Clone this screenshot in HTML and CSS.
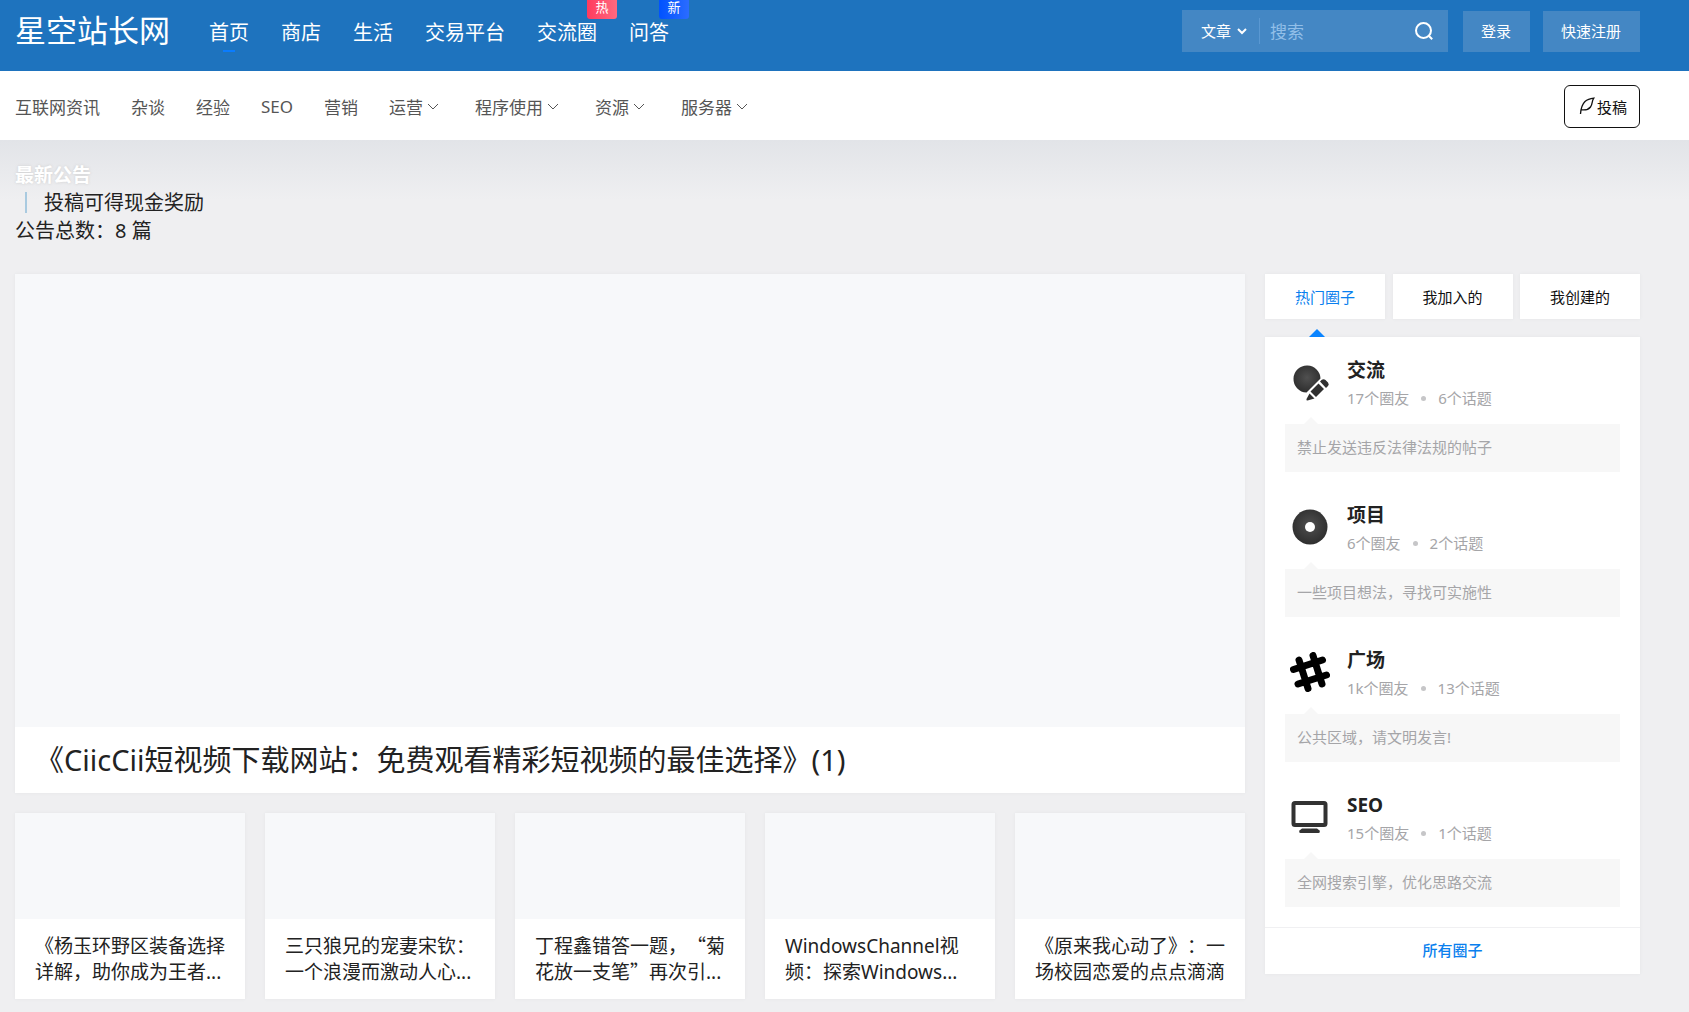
FILE: index.html
```html
<!DOCTYPE html>
<html lang="zh-CN">
<head>
<meta charset="utf-8">
<meta name="viewport" content="width=device-width, initial-scale=1">
<title>星空站长网</title>
<link rel="stylesheet" href="styles.css">
</head>
<body>
<header class="topbar">
  <a class="brand" href="#">星空站长网</a>
  <nav class="mainnav">
    <a class="active" href="#">首页</a>
    <a href="#">商店</a>
    <a href="#">生活</a>
    <a href="#">交易平台</a>
    <a href="#">交流圈<span class="badge hot">热</span></a>
    <a href="#">问答<span class="badge new">新</span></a>
  </nav>
  <form class="search">
    <span class="picker">
      <select aria-label="搜索类型"><option>文章</option></select>
      <svg class="chev" viewBox="0 0 12 12" aria-hidden="true"><path d="M2 4l4 4 4-4"/></svg>
    </span>
    <input type="text" placeholder="搜索" aria-label="搜索">
    <button type="submit" aria-label="搜索">
      <svg viewBox="0 0 20 20" aria-hidden="true"><circle cx="9.500" cy="9.500" r="7.500"/><path d="M15 15l3.200 3.200"/></svg>
    </button>
  </form>
  <button class="auth" type="button">登录</button>
  <button class="auth" type="button">快速注册</button>
</header>

<div class="subbar">
  <nav class="subnav">
    <a href="#">互联网资讯</a>
    <a href="#">杂谈</a>
    <a href="#">经验</a>
    <a href="#">SEO</a>
    <a href="#">营销</a>
    <a href="#">运营<svg class="chev" viewBox="0 0 12 12" aria-hidden="true"><path d="M1 4l5 5 5-5"/></svg></a>
    <a href="#">程序使用<svg class="chev" viewBox="0 0 12 12" aria-hidden="true"><path d="M1 4l5 5 5-5"/></svg></a>
    <a href="#">资源<svg class="chev" viewBox="0 0 12 12" aria-hidden="true"><path d="M1 4l5 5 5-5"/></svg></a>
    <a href="#">服务器<svg class="chev" viewBox="0 0 12 12" aria-hidden="true"><path d="M1 4l5 5 5-5"/></svg></a>
  </nav>
  <button class="submit" type="button">
    <svg viewBox="0 0 16 18" aria-hidden="true"><path d="M1.500 17C1.800 12 2.500 8 6 4.500 8.500 2.300 11.500 1.600 14.800 1.200 12.500 4 13.800 7 11.500 10 9.500 12.500 6 13.300 2.500 12.800"/></svg>
    <span>投稿</span>
  </button>
</div>

<div class="page">
  <section class="notice">
    <h2>最新公告</h2>
    <p class="notice-item"><a href="#">投稿可得现金奖励</a></p>
    <p>公告总数：8 篇</p>
  </section>

  <div class="columns">
    <main>
      <article class="feature">
        <div class="cover"></div>
        <h2><a href="#">《CiicCii短视频下载网站：免费观看精彩短视频的最佳选择》(1)</a></h2>
      </article>
      <div class="cards">
        <article class="card"><div class="thumb"></div><h3><a href="#">《杨玉环野区装备选择<br>详解，助你成为王者...</a></h3></article>
        <article class="card"><div class="thumb"></div><h3><a href="#">三只狼兄的宠妻宋钦：<br>一个浪漫而激动人心...</a></h3></article>
        <article class="card"><div class="thumb"></div><h3><a href="#">丁程鑫错答一题，<span class="cjk">“</span>菊<br>花放一支笔<span class="cjk">”</span>再次引...</a></h3></article>
        <article class="card"><div class="thumb"></div><h3><a href="#">WindowsChannel视<br>频：探索Windows...</a></h3></article>
        <article class="card"><div class="thumb"></div><h3><a href="#">《原来我心动了》：一<br>场校园恋爱的点点滴滴</a></h3></article>
      </div>
    </main>

    <aside>
      <div class="tabs">
        <button class="on" type="button">热门圈子</button>
        <button type="button">我加入的</button>
        <button type="button">我创建的</button>
      </div>
      <div class="circles">
        <ul>
          <li>
            <div class="head">
              <svg viewBox="0 0 40 40" aria-hidden="true">
                <defs><radialGradient id="g" cx="50%" cy="45%" r="55%"><stop offset="0" stop-color="#505050"/><stop offset="1" stop-color="#2e2e2e"/></radialGradient></defs>
                <path fill="url(#g)" d="M17.500 3.500a13.500 13.500 0 0 1 13 13L16.500 30.500a13.500 13.500 0 1 1 1-27z"/>
                <g fill="#303030"><path d="M28.500 21.500l5.500 5.500-8 8-5.500-5.500zM30 19.500l1.500-1.500q2-1.500 4 0l2.500 2.500q1.500 2 0 3.500l-2 2zM19.500 31.500l5 5-7 2q-1.500 0-1-1.500z"/></g>
              </svg>
              <div><h4>交流</h4><p>17个圈友<i></i>6个话题</p></div>
            </div>
            <p class="desc">禁止发送违反法律法规的帖子</p>
          </li>
          <li>
            <div class="head">
              <svg viewBox="0 0 40 40" aria-hidden="true"><circle cx="20" cy="20" r="17.500" fill="url(#g)"/><circle cx="20" cy="20" r="5" fill="#fff"/></svg>
              <div><h4>项目</h4><p>6个圈友<i></i>2个话题</p></div>
            </div>
            <p class="desc">一些项目想法，寻找可实施性</p>
          </li>
          <li>
            <div class="head">
              <svg viewBox="0 0 40 40" aria-hidden="true"><path stroke="#000" stroke-width="7" stroke-linecap="round" d="M9 8l9 28.500M23 3.500l9 28.500M3.500 17.500L32.500 8M8 32L36.500 23"/></svg>
              <div><h4>广场</h4><p>1k个圈友<i></i>13个话题</p></div>
            </div>
            <p class="desc">公共区域，请文明发言!</p>
          </li>
          <li>
            <div class="head">
              <svg viewBox="0 0 40 40" aria-hidden="true"><rect x="3.500" y="6" width="32" height="22" rx="1.500" fill="none" stroke="#323232" stroke-width="4"/><path fill="#323232" d="M12 31.500h15l2.500 2q1 2-1 2.500h-18q-2-.5-1-2.500z"/></svg>
              <div><h4>SEO</h4><p>15个圈友<i></i>1个话题</p></div>
            </div>
            <p class="desc">全网搜索引擎，优化思路交流</p>
          </li>
        </ul>
        <a class="all" href="#">所有圈子</a>
      </div>
    </aside>
  </div>
</div>
</body>
</html>
```
FILE: styles.css
```css
* { box-sizing: border-box; }

body, h2, h3, h4, p, ul { margin: 0; padding: 0; }

body {
  font-family: "Noto Sans", "Noto Sans CJK SC", sans-serif;
  text-spacing-trim: space-all;
  background: #efeff1;
  color: #222;
}

a { color: inherit; text-decoration: none; }

button, input, select {
  font: inherit;
  color: inherit;
  border: 0;
  border-radius: 0;
  background: none;
  padding: 0;
}

ul { list-style: none; }

.cjk { font-family: "Noto Sans CJK SC", sans-serif; line-height: 1; }

.chev {
  width: 12px;
  height: 12px;
  fill: none;
  stroke: currentColor;
  stroke-width: 2;
}

/* top bar */
.topbar {
  display: flex;
  align-items: flex-start;
  height: 71px;
  padding: 0 49px 0 15px;
  background: #1e73be;
  color: #fff;
}

.brand {
  font-size: 31px;
  line-height: 60px;
  margin-right: 39px;
}

.mainnav {
  display: flex;
  flex: 1;
  gap: 32px;
  font-size: 20px;
  line-height: 66px;
}

.mainnav a { position: relative; white-space: nowrap; }

.mainnav .active::after {
  content: "";
  position: absolute;
  left: 50%;
  top: 50px;
  width: 12px;
  height: 2px;
  margin-left: -6px;
  background: #0a7cff;
}

.badge {
  position: absolute;
  top: 0;
  left: 100%;
  width: 30px;
  height: 19px;
  margin-left: -10px;
  border-radius: 0 0 3px 3px;
  font-size: 13px;
  line-height: 15px;
  text-align: center;
}

.hot { background: linear-gradient(90deg, #ff3a5e, #ff6a80); }
.new { background: linear-gradient(90deg, #0052ff, #2b6cff); }

.search {
  display: flex;
  align-items: center;
  width: 266px;
  height: 42px;
  margin-top: 10px;
  margin-right: 15px;
  background: #4487c4;
}

.picker {
  display: flex;
  align-items: center;
  height: 26px;
  padding-left: 19px;
  padding-right: 11px;
  border-right: 1px solid #5a98d2;
}

.picker select {
  appearance: none;
  width: 35px;
  font-size: 15px;
}

.search input {
  flex: 1;
  min-width: 0;
  padding-left: 10px;
  font-size: 17px;
  outline: 0;
}

.search input::placeholder { color: #92bfe8; }

.search button {
  display: flex;
  padding: 0 14px;
}

.search button svg {
  width: 20px;
  height: 20px;
  fill: none;
  stroke: #fff;
  stroke-width: 2;
}

.auth {
  height: 41px;
  margin-top: 11px;
  padding: 0 19px 2px 18px;
  background: #4487c4;
  font-size: 15px;
}

.auth + .auth { margin-left: 13px; }

/* category bar */
.subbar {
  display: flex;
  justify-content: space-between;
  align-items: center;
  height: 69px;
  padding: 1px 49px 0 15px;
  background: #fff;
}

.subnav {
  display: flex;
  gap: 31px;
  font-size: 17px;
  color: #555;
}

.subnav a { display: flex; align-items: center; white-space: nowrap; }

.subnav .chev {
  margin: 0 5px 0 4px;
  stroke-width: 1;
}

.submit {
  display: flex;
  align-items: center;
  gap: 2px;
  height: 43px;
  padding: 0 12px 0 14px;
  border: 1px solid #111;
  border-radius: 6px;
  font-size: 15px;
  color: #111;
}

.submit svg {
  width: 16px;
  height: 18px;
  fill: none;
  stroke: currentColor;
  stroke-width: 1.3;
}

/* page body */
.page {
  padding: 22px 49px 13px 15px;
  background: linear-gradient(#e2e4e8, #efeff1 60px);
}

.notice {
  margin-bottom: 28px;
  font-size: 20px;
  line-height: 28px;
}

.notice h2 {
  font-size: 19px;
  line-height: 27px;
  font-weight: 700;
  color: #fff;
  text-shadow: 0 0 3px #ccc;
}

.notice-item { padding-left: 10px; }

.notice-item a {
  display: inline-block;
  height: 21px;
  line-height: 21px;
  padding-left: 17px;
  border-left: 2px solid #a9cae0;
}

.notice p:last-child { padding-bottom: 1px; }

.columns {
  display: grid;
  grid-template-columns: 1fr 375px;
  gap: 20px;
  align-items: start;
}

.feature, .card, .circles, .tabs button {
  background: #fff;
  box-shadow: 0 0 3px #e4e5e7;
}

.cover {
  height: 453px;
  background: #f7f8fa;
}

.feature h2 {
  padding: 0 20px;
  font-size: 29px;
  font-weight: 400;
  line-height: 66px;
}

.cards {
  display: grid;
  grid-template-columns: repeat(5, 1fr);
  gap: 20px;
  margin-top: 20px;
}

.thumb {
  height: 106px;
  background: #f7f8fa;
}

.card h3 {
  padding: 14px 0 14px 20px;
  font-size: 19px;
  font-weight: 400;
  line-height: 26px;
  white-space: nowrap;
}

/* circles */
.tabs {
  display: flex;
  justify-content: space-between;
  margin-bottom: 18px;
}

.tabs button {
  width: 120px;
  height: 45px;
  font-size: 15px;
  color: #111;
}

.tabs .on { color: #0a7fee; }

.circles { position: relative; }

.circles::before {
  content: "";
  position: absolute;
  top: -8px;
  left: 44px;
  border: 8px solid transparent;
  border-top: 0;
  border-bottom-color: #0a84ff;
}

.circles ul { padding-bottom: 10px; }

.circles li { padding: 20px 20px 10px; }

.head {
  display: flex;
  align-items: flex-start;
  gap: 17px;
  height: 67px;
  padding: 0 5px;
}

.head svg { width: 40px; height: 40px; margin-top: 5px; fill: none; }

.head h4 {
  font-size: 19px;
  line-height: 27px;
}

.head p {
  display: flex;
  align-items: center;
  font-size: 15px;
  line-height: 29px;
  color: #a5a5a8;
}

.head i {
  width: 5px;
  height: 5px;
  margin: 0 12px;
  border-radius: 50%;
  background: #c6c6c8;
}

.desc {
  position: relative;
  padding: 0 12px 2px;
  background: #f7f7f7;
  color: #a5a5a8;
  font-size: 15px;
  line-height: 46px;
}

.desc::before {
  content: "";
  position: absolute;
  top: -7px;
  left: 18px;
  border: 8px solid transparent;
  border-top: 0;
  border-bottom-color: #f7f7f7;
}

.all {
  display: block;
  padding-bottom: 2px;
  border-top: 1px solid #f0f0f2;
  text-align: center;
  font-size: 15px;
  font-weight: 500;
  line-height: 44px;
  color: #0a7fee;
}
```
